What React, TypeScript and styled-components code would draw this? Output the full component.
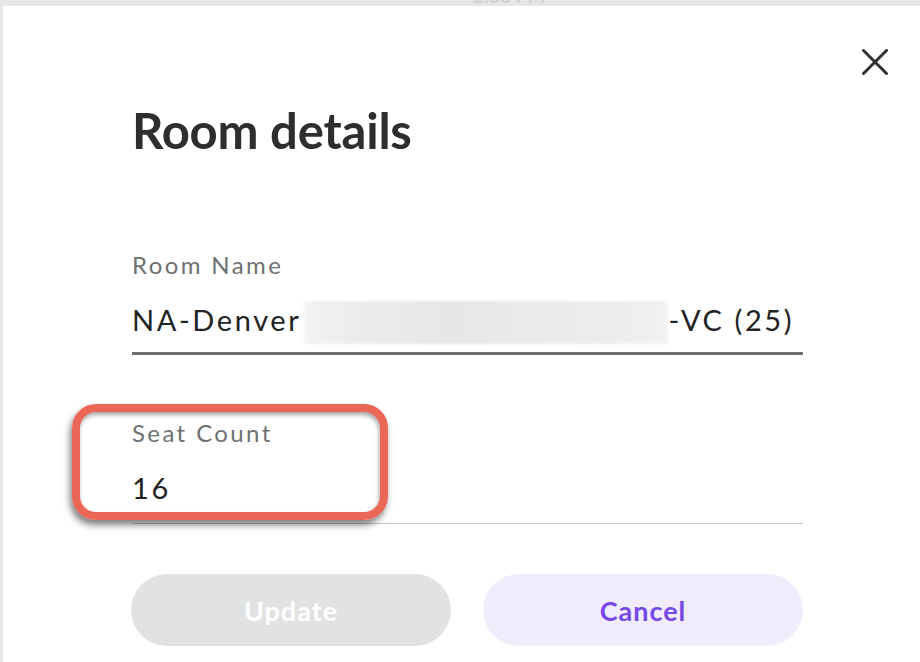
import React from "react";
import styled, { createGlobalStyle } from "styled-components";

const Global = createGlobalStyle`
  html, body { margin: 0; padding: 0; }
  body {
    background: #e5e7e6;
    width: 920px;
    height: 662px;
    overflow: hidden;
    font-family: Lato, "Open Sans", sans-serif;
  }
`;

const Page = styled.div`
  display: flex;
  flex-direction: column;
  width: 920px;
  height: 662px;
`;

const StatusStrip = styled.div`
  height: 6px;
  overflow: hidden;
  display: flex;
  justify-content: center;
  padding-left: 98px;
`;

const StatusText = styled.span`
  margin-top: -13px;
  font-size: 19px;
  line-height: 18px;
  font-weight: 700;
  color: #cfd1d0;
`;

const Modal = styled.div`
  position: relative;
  flex: 1;
  margin-left: 3px;
  background: #ffffff;
  padding: 100px 0 0 129px;
  display: flex;
  flex-direction: column;
`;

const CloseButton = styled.button`
  position: absolute;
  top: 43px;
  right: 32px;
  width: 26px;
  height: 26px;
  padding: 0;
  border: none;
  background: transparent;
  display: flex;
  cursor: pointer;
`;

const Title = styled.h1`
  margin: 0;
  font-size: 49px;
  line-height: 49px;
  font-weight: 700;
  color: #2d2e30;
  letter-spacing: -0.2px;
`;

const Form = styled.div`
  width: 671px;
  display: flex;
  flex-direction: column;
  margin-top: 98px;
`;

const Field = styled.div<{ $strong?: boolean; $gap: number }>`
  position: relative;
  display: flex;
  flex-direction: column;
  gap: ${(p) => p.$gap}px;
  padding-bottom: ${(p) => (p.$strong ? 18 : 21)}px;
  border-bottom: ${(p) => (p.$strong ? "3px solid #6b6f6f" : "1.5px solid #c5c6c6")};
  & + & {
    margin-top: 66px;
  }
`;

const Label = styled.div`
  font-size: 24px;
  line-height: 24px;
  letter-spacing: 2.4px;
  color: #6d7171;
`;

const Value = styled.div`
  display: flex;
  align-items: center;
  height: 29px;
  font-size: 29px;
  line-height: 29px;
  letter-spacing: 2.6px;
  color: #222324;
  white-space: nowrap;
`;

const Redacted = styled.span`
  display: inline-block;
  flex: none;
  width: 364px;
  height: 43px;
  margin: 6px 0 0 3px;
  background: linear-gradient(
    90deg,
    #f3f3f3 0%,
    #ececec 15%,
    #e7e7e7 40%,
    #eaeaea 60%,
    #ededed 85%,
    #f2f2f2 100%
  );
  filter: blur(0.8px);
`;

const Highlight = styled.div`
  position: absolute;
  left: -60px;
  top: -17px;
  width: 316px;
  height: 116px;
  box-sizing: border-box;
  border: 8px solid #ea6656;
  border-radius: 24px;
  box-shadow: -2px 5px 7px rgba(0, 0, 0, 0.5), inset -1px 3px 4px rgba(0, 0, 0, 0.35);
  pointer-events: none;
`;

const Actions = styled.div`
  display: flex;
  gap: 32px;
  margin-top: 50px;
  margin-left: -1px;
`;

const PillButton = styled.button<{ $variant: "disabled" | "secondary" }>`
  width: 320px;
  height: 72px;
  border: none;
  border-radius: 36px;
  font-family: Lato, "Open Sans", sans-serif;
  font-size: 27px;
  font-weight: 700;
  letter-spacing: 1px;
  background: ${(p) => (p.$variant === "disabled" ? "#e1e2e3" : "#f1ecfc")};
  color: ${(p) => (p.$variant === "disabled" ? "#ffffff" : "#7548e6")};
  cursor: pointer;
`;

const CloseIcon = () => (
  <svg width="26" height="26" viewBox="0 0 26 26" fill="none">
    <path d="M1.5 1.5 L24.5 24.5 M24.5 1.5 L1.5 24.5" stroke="#2f3031" strokeWidth="3" strokeLinecap="round" />
  </svg>
);

export default function App() {
  return (
    <>
      <Global />
      <Page>
        <StatusStrip>
          <StatusText>2:30 PM</StatusText>
        </StatusStrip>
        <Modal>
          <CloseButton aria-label="Close">
            <CloseIcon />
          </CloseButton>
          <Title>Room details</Title>
          <Form>
            <Field $strong $gap={28}>
              <Label>Room Name</Label>
              <Value>
                NA-Denver
                <Redacted />
                -VC (25)
              </Value>
            </Field>
            <Field $gap={28}>
              <Highlight />
              <Label>Seat Count</Label>
              <Value>16</Value>
            </Field>
          </Form>
          <Actions>
            <PillButton $variant="disabled">Update</PillButton>
            <PillButton $variant="secondary">Cancel</PillButton>
          </Actions>
        </Modal>
      </Page>
    </>
  );
}
